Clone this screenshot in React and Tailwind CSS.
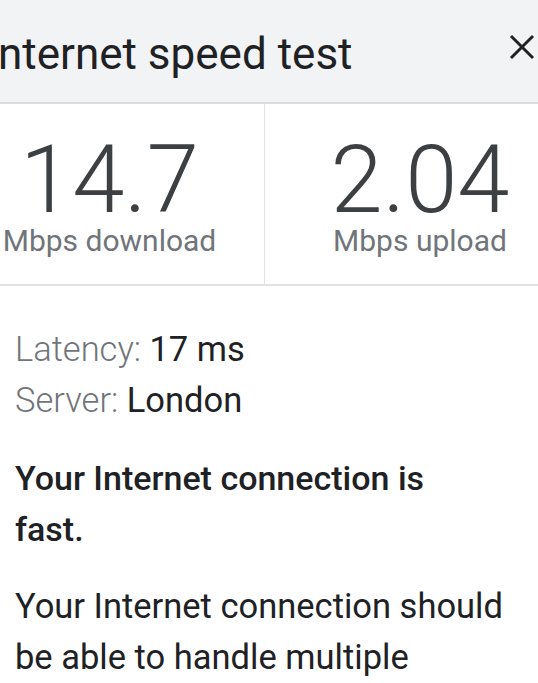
import React from "react";

// speed test result card, cropped like the phone screenshot
function CloseIcon() {
  return (
    <svg width="26" height="26" viewBox="0 0 26 26" className="shrink-0 mt-[2px]">
      <path d="M2 2 L24 24 M24 2 L2 24" stroke="#202124" strokeWidth="3" strokeLinecap="butt" fill="none" />
    </svg>
  );
}

function Stat({ value, label, divider }) {
  return (
    <div className={`flex flex-col items-center pt-[31px] pb-[28px] ${divider ? "border-r-[1.5px] border-[#e2e2e2]" : ""}`}>
      <div className="text-[94px] leading-[90px] font-light text-[#3c4043]">{value}</div>
      <div className="text-[30px] leading-none text-[#70757a] mt-[1px]">{label}</div>
    </div>
  );
}

export default function App() {
  return (
    <div className="w-[538px] h-[683px] overflow-hidden bg-white font-['Roboto',sans-serif]">
      {/* header */}
      <div className="h-[104px] bg-[#f1f3f4] border-b-2 border-[#dadce0] flex items-start justify-between pt-[32px] pr-[3px]">
        <div className="text-[44px] leading-none text-[#202124] -ml-[14px] whitespace-nowrap">Internet speed test</div>
        <CloseIcon />
      </div>

      {/* download / upload */}
      <div className="w-[620px] -ml-[45px] grid grid-cols-2 border-b-2 border-[#e2e2e2]">
        <Stat value="14.7" label="Mbps download" divider />
        <Stat value="2.04" label="Mbps upload" />
      </div>

      <div className="pl-[15px] pr-[24px] text-[34.5px] leading-[51px] text-[#202124]">
        <div className="mt-[38px]">
          <div>
            <span className="font-light text-[#70757a]">Latency: </span>17 ms
          </div>
          <div>
            <span className="font-light text-[#70757a]">Server: </span>London
          </div>
        </div>
        <p className="mt-[27px] text-[34px] font-medium">
          Your Internet connection is
          <br />
          fast.
        </p>
        <p className="mt-[26px]">Your Internet connection should be able to handle multiple devices streaming HD videos at the same time.</p>
      </div>
    </div>
  );
}
